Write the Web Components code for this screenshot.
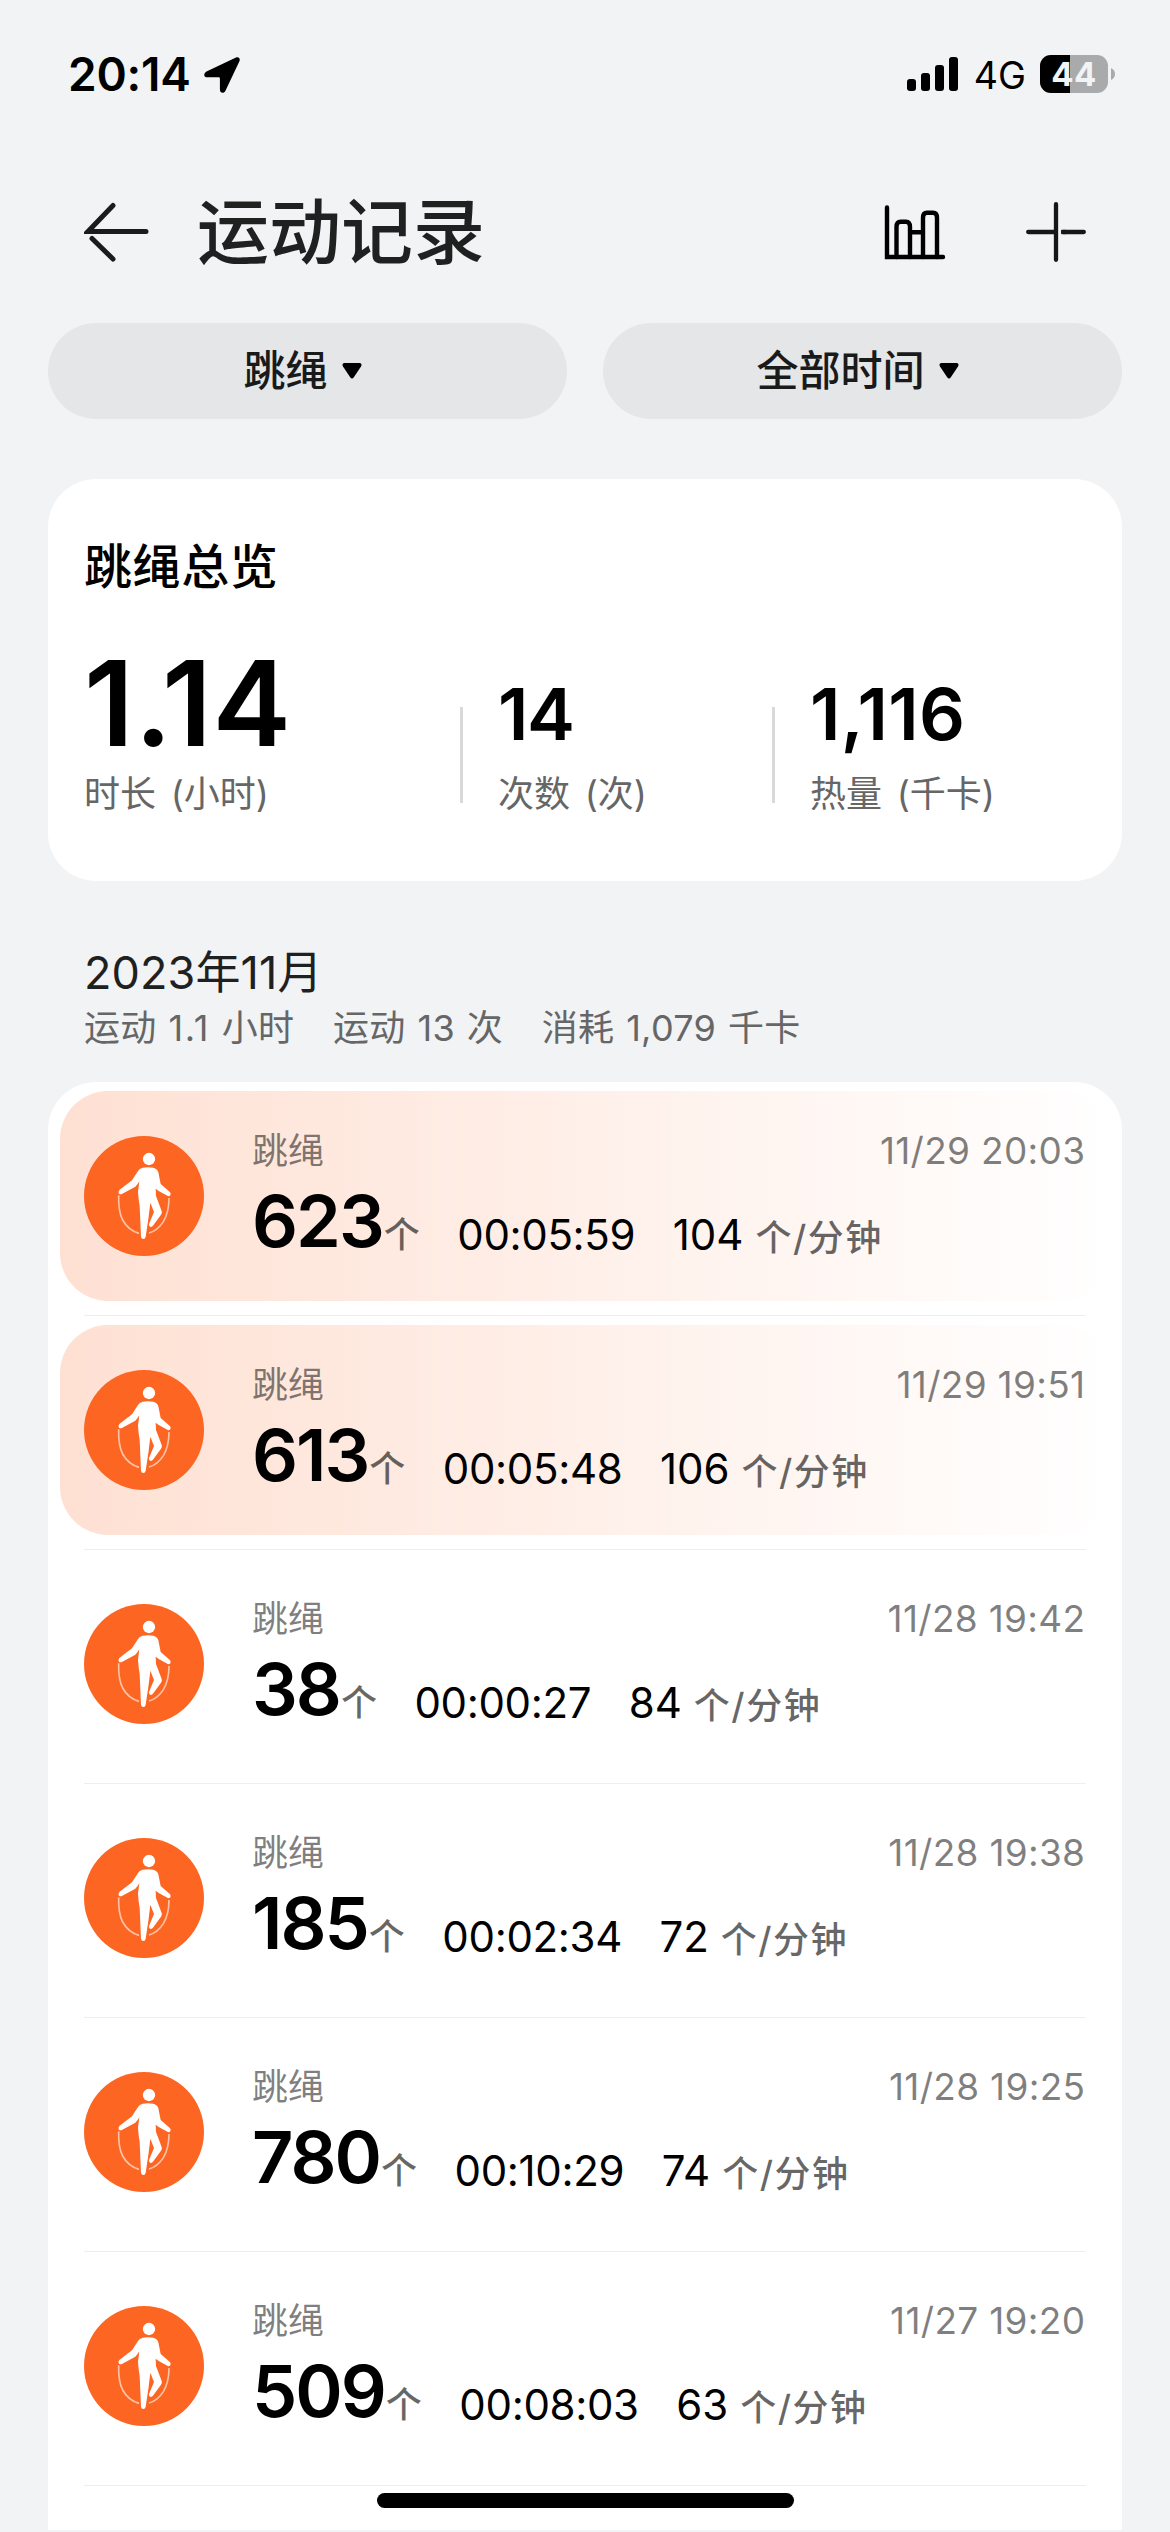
<!DOCTYPE html>
<html lang="zh-CN">
<head>
<meta charset="utf-8">
<title>运动记录</title>
<style>
  html, body { margin: 0; padding: 0; }
  body { width: 1170px; height: 2532px; overflow: hidden; background: #f1f3f5; color: #000;
    font-family: Inter, "Noto Sans CJK SC", sans-serif; }
</style>
</head>
<body>
<sport-app></sport-app>
<script>
const define = (name, html) => customElements.define(name, class extends HTMLElement {
  connectedCallback() {
    if (this.shadowRoot) return;
    const root = this.attachShadow({ mode: 'open' });
    const a = n => this.getAttribute(n) || '';
    root.innerHTML = typeof html === 'function' ? html(a) : html;
  }
});

define('status-bar', `
<style>
  :host { display: flex; height: 148px; box-sizing: border-box; padding: 44px 55px 0 68px; justify-content: space-between; }
  div { display: flex; height: 60px; align-items: center; }
  .time { font-size: 46px; line-height: 60px; font-weight: 600; letter-spacing: -0.2px; }
  .net { font-size: 37.5px; line-height: 60px; margin: 3px 0 0 16px; }
  .arrow { margin: 2px 0 0 13px; }
  .batt { position: relative; margin-left: 14px; width: 75px; height: 38px; }
  .batt b { position: absolute; left: 0; top: 0; width: 68px; text-align: center; font-size: 33px; line-height: 38px; font-weight: 700; letter-spacing: .4px; color: #f1f3f5; }
  svg { display: block; }
</style>
<div><span class="time">20:14</span>
<svg class="arrow" width="36" height="36" viewBox="0 0 36 36"><path d="M32 .6 3 14.3C-.9 16.400-.6 20.300 3.500 20.300H14.300C15.500 20.300 15.900 20.700 15.900 21.900V32.300C15.900 36.600 20 37 21.700 33.200L35.300 4.500C36.700 1.500 34.700-.7 32 .6Z"/></svg></div>
<div>
<svg width="51" height="34" viewBox="0 0 51 34"><rect y="22" width="9" height="12" rx="3"/><rect x="14" y="16" width="9" height="18" rx="3"/><rect x="28" y="8" width="9" height="26" rx="3"/><rect x="42" width="9" height="34" rx="3"/></svg>
<span class="net">4G</span>
<span class="batt"><svg width="75" height="38" viewBox="0 0 75 38"><rect width="68" height="38" rx="11" fill="#a9aaac"/><path d="M11 0H30V38H11A11 11 0 0 1 0 27V11A11 11 0 0 1 11 0Z"/><path d="M71 13Q75 15 75 19T71 25Z" fill="#a9aaac"/></svg><b>44</b></span>
</div>`);

define('nav-bar', `
<style>
  :host { display: flex; align-items: center; height: 90px; margin-top: 39px; padding: 0 84px; }
  h1 { margin: 0 auto 0 48px; font-size: 72px; line-height: 90px; font-weight: 500; color: #1f2020; }
  svg { display: block; fill: none; stroke-linecap: round; }
  .chart { margin-right: 80px; }
</style>
<svg width="65" height="62" viewBox="0 0 65 62" stroke="#1a1b1b" stroke-width="5"><path d="M29 4.500 4 30.500H62"/><path d="M8 37.500 29 58"/></svg>
<h1><slot></slot></h1>
<svg class="chart" width="62" height="58" viewBox="0 0 62 58" stroke="#000" stroke-width="4.400"><path d="M3 4.500V54H59"/><path d="M12.500 54V24Q12.500 18.700 16.500 18.700H22Q26 18.700 26 24V54M26 29.200H39M39 54V15Q39 9.800 43 9.800H49Q53 9.800 53 15V54"/></svg>
<svg width="60" height="60" viewBox="0 0 60 60" stroke="#151616" stroke-width="4.300"><path d="M30 2.200V57.800M2.200 30H29M57.800 30H37"/><path d="M35.200 30H40" stroke-linecap="butt"/></svg>`);

define('filter-pill', `
<style>
  :host { flex: 1; box-sizing: border-box; padding-right: 10px; display: flex; align-items: center; justify-content: center; gap: 14px; height: 96px; border-radius: 48px; background: #e5e6e8;
    font-size: 42px; line-height: 60px; font-weight: 500; color: #191a1a; }
  svg { display: block; }
</style>
<span><slot></slot></span>
<svg width="20" height="16" viewBox="0 0 20 16"><path d="M2 0H18Q20.500 .8 19 3.500L12 14Q10 17 8 14L1 3.500Q-.5 .8 2 0Z"/></svg>`);

define('stat-item', a => `
<style>
  :host { display: block; width: ${a('w')}px; }
  p { margin: 0; white-space: nowrap; }
  .v { font-size: 72px; line-height: 100px; font-weight: 600; margin-bottom: 5px; letter-spacing: ${a('track')}px; }
  :host([main]) .v { font-size: 118px; line-height: 130px; margin-bottom: 1px; }
  .l { font-size: 36px; line-height: 50px; color: #666; word-spacing: 4.500px; }
</style>
<p class="v">${a('value')}</p><p class="l"><slot></slot></p>`);

define('overview-card', `
<style>
  :host { display: flex; flex-direction: column; justify-content: space-between; box-sizing: border-box; height: 402px; margin: 60px 48px 0; padding: 58px 36px 62px; border-radius: 48px; background: #fff; }
  h2 { margin: 0; font-size: 48px; line-height: 60px; font-weight: 500; letter-spacing: .6px; }
  .stats { display: flex; align-items: flex-end; }
  i { width: 3px; height: 96px; margin: 0 35px 16px 0; background: #d9d9d9; }
</style>
<h2>跳绳总览</h2>
<div class="stats">
<stat-item main w="376" value="1.14" track="0.5">时长 (小时)</stat-item><i></i>
<stat-item w="274" value="14" track="-1.5">次数 (次)</stat-item><i></i>
<stat-item w="270" value="1,116" track="0.3">热量 (千卡)</stat-item>
</div>`);

define('month-head', `
<style>
  :host { display: block; margin: 65px 84px 32px; }
  h3 { margin: 0; font-size: 45px; line-height: 54px; font-weight: 400; color: #1f2020; letter-spacing: .1px; }
  div { display: flex; gap: 38.500px; margin-top: 6px; font-size: 36px; line-height: 44px; color: #666; white-space: nowrap; letter-spacing: .3px; word-spacing: 1.500px; }
  b { font-weight: 400; letter-spacing: 1.600px; }
</style>
<h3>2023年11月</h3>
<div><span>运动 <b>1.1</b> 小时</span><span>运动 13 次</span><span>消耗 1,079 千卡</span></div>`);

define('rope-icon', `
<style>:host { display: block; width: 120px; height: 120px; } svg { display: block; }</style>
<svg width="120" height="120" viewBox="42 48 360 360"><circle cx="222" cy="228" r="180" fill="#fc6522"/>
<g fill="none" stroke="#fec3a6" stroke-width="5"><path d="M146 226C145 262 150 285 158 300C170 322 185 334 207 340"/><path d="M297 234C297 262 292 285 280 305C268 324 255 334 237 339"/></g>
<g fill="#fff"><circle cx="237" cy="117" r="18.500"/><path d="M218 143Q208 146 204 153L186 181L148 210Q143 216 147 221Q151 224 157 221L196 200Q202 195 208 184L204 215Q205 235 209 258L213 350Q214 357 220 357Q226 357 227 350L236 290L241 248L252 276L237 312Q236 320 242 321Q247 321 250 316L273 284Q277 279 275 273L258 228L257 206L266 213L295 229Q302 229 302 222Q302 218 297 214L272 192L265 157Q262 146 250 143Q235 140 218 143Z"/></g></svg>`);

define('rope-record', a => `
<style>
  :host { display: block; height: 234px; box-sizing: border-box; padding: 9px 12px 0; }
  .row { display: flex; height: 210px; box-sizing: border-box; padding: 37px 24px 0; border-radius: 48px; }
  :host([hot]) .row { background: linear-gradient(90deg, rgba(252,101,34,.2), rgba(252,101,34,0)); }
  hr { border: 0; height: 1px; margin: 14px 24px 0; background: #edeeef; }
  rope-icon { margin: 8px 48px 0 0; }
  .main { flex: 1; }
  .top, .nums { display: flex; white-space: nowrap; }
  .top { justify-content: space-between; height: 44px; font-size: 36px; line-height: 46px; color: rgba(0,0,0,.5); }
  .date { font-size: 37px; line-height: 45px; letter-spacing: .3px; margin-right: .7px; }
  .nums { align-items: flex-end; margin-top: 4px; height: 90px; }
  .count { font-size: 72px; line-height: 90px; font-weight: 600; letter-spacing: -2px; }
  .unit { font-size: 36px; font-weight: 500; line-height: 62px; color: rgba(0,0,0,.6); margin-left: 1px; }
  .n { font-size: 42px; line-height: 63px; margin-left: 37.500px; }
  .t { letter-spacing: -.35px; }
  .rate { line-height: 56px; margin-left: 12px; letter-spacing: 1.500px; }
</style>
<div class="row"><rope-icon></rope-icon><div class="main">
<div class="top"><span>跳绳</span><span class="date">${a('date')}</span></div>
<div class="nums"><span class="count">${a('count')}</span><span class="unit">个</span><span class="n t">${a('time')}</span><span class="n">${a('rate')}</span><span class="unit rate">个/分钟</span></div>
</div></div><hr>`);

define('sport-app', `
<style>
  :host { display: flex; flex-direction: column; width: 1170px; height: 2532px; overflow: hidden; position: relative; }
  :host > * { flex-shrink: 0; }
  .filters { display: flex; gap: 36px; margin: 46px 48px 0; }
  .list { margin: 0 48px; border-radius: 48px 48px 0 0; background: #fff; height: 1448px; flex-shrink: 0; }
  .home { position: absolute; left: 377px; top: 2493px; width: 417px; height: 15px; border-radius: 8px; background: #000; }
</style>
<status-bar></status-bar>
<nav-bar>运动记录</nav-bar>
<div class="filters"><filter-pill>跳绳</filter-pill><filter-pill>全部时间</filter-pill></div>
<overview-card></overview-card>
<month-head></month-head>
<div class="list">
<rope-record hot date="11/29 20:03" count="623" time="00:05:59" rate="104"></rope-record>
<rope-record hot date="11/29 19:51" count="613" time="00:05:48" rate="106"></rope-record>
<rope-record date="11/28 19:42" count="38" time="00:00:27" rate="84"></rope-record>
<rope-record date="11/28 19:38" count="185" time="00:02:34" rate="72"></rope-record>
<rope-record date="11/28 19:25" count="780" time="00:10:29" rate="74"></rope-record>
<rope-record date="11/27 19:20" count="509" time="00:08:03" rate="63"></rope-record>
</div>
<div class="home"></div>`);
</script>
</body>
</html>
